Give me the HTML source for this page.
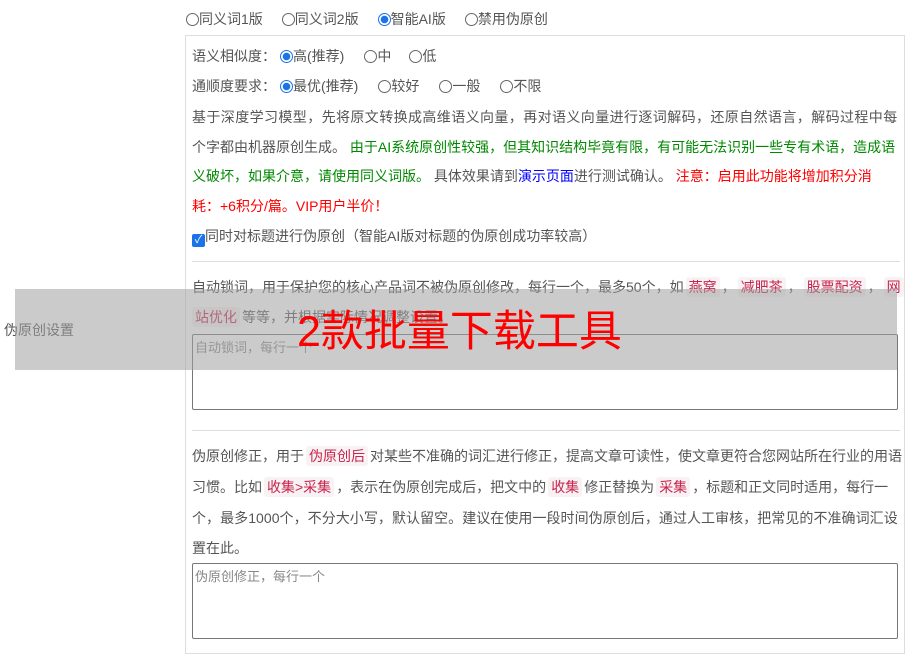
<!DOCTYPE html>
<html><head><meta charset="utf-8"><style>
body{margin:0;width:911px;height:658px;background:#fff;font-family:"Liberation Sans","Noto Sans CJK SC",sans-serif;font-size:14px;color:#555;position:relative;overflow:hidden}
.a{position:absolute;white-space:nowrap;line-height:20px}
.r{display:inline-block;width:13px;height:13px;border:1px solid #666;border-radius:50%;vertical-align:-2px;margin-right:0;box-sizing:border-box}
.r.on{border:1px solid #1a73e8;background:radial-gradient(circle,#1a73e8 3.5px,#fff 4px)}
.g{color:#080}.b{color:#00f}.red{color:#f00}
code{font-family:inherit;color:#c7254e;background:#f9f2f4;padding:2px 3px;border-radius:3px;margin:0 2px}
.ta{position:absolute;left:192px;width:706px;border:1px solid #777;border-radius:2px;box-sizing:border-box;color:#888;font-size:13px;padding:2px 2px}
.hr{position:absolute;left:192px;width:708px;height:1px;background:#ddd}
.s{display:inline-block}
</style></head><body>
<div class="a" style="left:186px;top:9px"><span class="r"></span>同义词1版<span class="s" style="width:19px"></span><span class="r"></span>同义词2版<span class="s" style="width:19px"></span><span class="r on"></span>智能AI版<span class="s" style="width:19px"></span><span class="r"></span>禁用伪原创</div>
<div style="position:absolute;left:185px;top:35px;width:720px;height:619px;border:1px solid #ddd;box-sizing:border-box"></div>
<div class="a" style="left:192px;top:46px">语义相似度：<span class="s" style="width:4px"></span><span class="r on"></span>高(推荐)<span class="s" style="width:20px"></span><span class="r"></span>中<span class="s" style="width:18px"></span><span class="r"></span>低</div>
<div class="a" style="left:192px;top:76px">通顺度要求：<span class="s" style="width:4px"></span><span class="r on"></span>最优(推荐)<span class="s" style="width:20px"></span><span class="r"></span>较好<span class="s" style="width:20px"></span><span class="r"></span>一般<span class="s" style="width:20px"></span><span class="r"></span>不限</div>
<div class="a" style="left:192px;top:107px;letter-spacing:0.4px">基于深度学习模型，先将原文转换成高维语义向量，再对语义向量进行逐词解码，还原自然语言，解码过程中每</div>
<div class="a" style="left:192px;top:137px">个字都由机器原创生成。 <span class="g">由于AI系统原创性较强，但其知识结构毕竟有限，有可能无法识别一些专有术语，造成语</span></div>
<div class="a" style="left:192px;top:166px"><span class="g">义破坏，如果介意，请使用同义词版。</span> 具体效果请到<span class="b">演示页面</span>进行测试确认。 <span class="red">注意：启用此功能将增加积分消</span></div>
<div class="a red" style="left:192px;top:196px">耗：+6积分/篇。VIP用户半价！</div>
<div class="a" style="left:192px;top:226px"><span style="display:inline-block;width:13px;height:13px;background:#1a73e8;border-radius:2px;vertical-align:-2px;color:#fff;font-size:11px;line-height:13px;text-align:center">✓</span>同时对标题进行伪原创（智能AI版对标题的伪原创成功率较高）</div>
<div class="hr" style="top:261px"></div>
<div class="a" style="left:192px;top:277px">自动锁词，用于保护您的核心产品词不被伪原创修改，每行一个，最多50个，如<code>燕窝</code>，<code>减肥茶</code>，<code>股票配资</code>，<code>网</code></div>
<div class="a" style="left:192px;top:307px"><code style="margin-left:0">站优化</code>等等，并根据实际情况调整设置。</div>
<div class="ta" style="top:334px;height:76px">自动锁词，每行一个</div>
<div class="hr" style="top:430px"></div>
<div class="a" style="left:192px;top:446px">伪原创修正，用于<code>伪原创后</code>对某些不准确的词汇进行修正，提高文章可读性，使文章更符合您网站所在行业的用语</div>
<div class="a" style="left:192px;top:477px">习惯。比如<code>收集&gt;采集</code>，表示在伪原创完成后，把文中的<code>收集</code>修正替换为<code>采集</code>，标题和正文同时适用，每行一</div>
<div class="a" style="left:192px;top:508px;letter-spacing:0.05px">个，最多1000个，不分大小写，默认留空。建议在使用一段时间伪原创后，通过人工审核，把常见的不准确词汇设</div>
<div class="a" style="left:192px;top:538px">置在此。</div>
<div class="ta" style="top:563px;height:76px">伪原创修正，每行一个</div>
<div class="a" style="left:4px;top:320px">伪原创设置</div>
<div style="position:absolute;left:15px;top:289px;width:882px;height:81px;background:rgba(160,160,160,0.55)"></div>
<div class="a" style="left:297px;top:306px;font-size:43px;line-height:52px;color:#f00">2款批量下载工具</div>
</body></html>
